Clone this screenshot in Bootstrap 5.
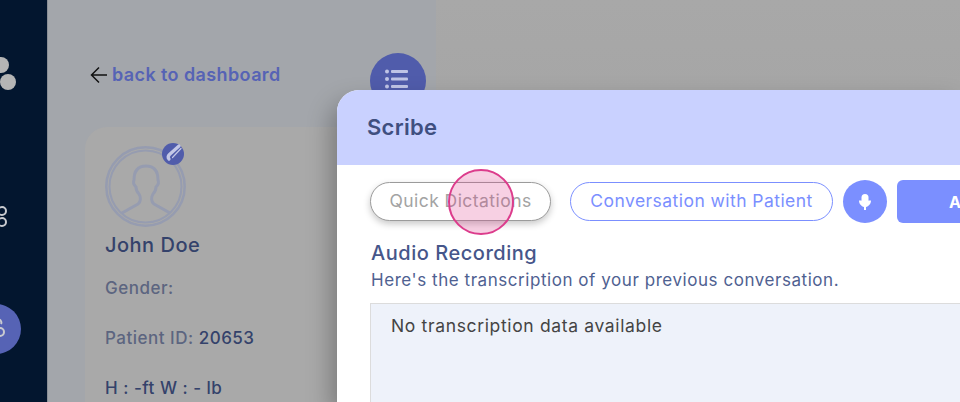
<!DOCTYPE html>
<html lang="en">
<head>
    <meta charset="UTF-8">
    <meta name="viewport" content="width=device-width, initial-scale=1.0">
    <title>Scribe</title>
    <link href="https://cdn.jsdelivr.net/npm/bootstrap@5.3.0/dist/css/bootstrap.min.css" rel="stylesheet">
    <style>
        body {
            height: 402px;
            overflow: hidden;
            position: relative;
            background: linear-gradient(#a8a8a8, #9f9f9f);
            font-family: "Inter", "Liberation Sans", sans-serif;
        }
        .side-rail {
            width: 48px;
            height: 402px;
            flex: none;
            background: #03162f;
            border-right: 1px solid #8b8f96;
        }
        .side-rail svg { display: block; }
        .patient-panel {
            width: 388px;
            height: 402px;
            flex: none;
            background: #a3a6ab;
            padding: 53px 10px 0 37px;
        }
        .back-row { padding: 10px 0 0 5px; }
        .back-link {
            color: #5663b5;
            font-size: 18px;
            font-weight: 600;
            line-height: 24px;
            text-decoration: none;
            letter-spacing: 0.4px;
        }
        .list-btn {
            width: 56px;
            height: 56px;
            background: #505cab;
        }
        .list-btn svg { margin-bottom: 4px; margin-right: 2px; }
        .patient-card {
            margin-top: 18px;
            margin-right: -10px;
            padding: 19px 20px;
            background: #a9a9a9;
            border-radius: 22px 0 0 0;
            color: #34426b;
        }
        .avatar-wrap { width: 81px; height: 81px; }
        .edit-dot {
            top: -3px;
            right: 2px;
            width: 22px;
            height: 22px;
            background: #505cab;
        }
        .edit-dot svg { overflow: visible; }
        .patient-name { font-size: 20px; font-weight: 500; line-height: 24px; letter-spacing: 0.5px; margin: 6px 0 0; }
        .patient-line { font-size: 17px; font-weight: 500; line-height: 24px; letter-spacing: 0.5px; margin: 0; color: #5c6580; }
        .patient-line b { font-weight: 500; color: #34426b; }
        .line-gender { margin-top: 19px; }
        .line-id { margin-top: 26px; }
        .line-size { margin-top: 26px; color: #34426b; }

        .scribe-modal {
            position: absolute;
            left: 337px;
            top: 90px;
            width: 623px;
            height: 312px;
            border: 0;
            background: #fff;
            border-radius: 22px 0 0 0;
            overflow: hidden;
            box-shadow: -6px 12px 24px rgba(0, 0, 0, 0.28);
        }
        .scribe-head {
            height: 75px;
            flex: none;
            background: #c9d1ff;
            padding: 0 30px;
            border: 0;
            border-radius: 0;
        }
        .scribe-title {
            color: #3f4f80;
            font-size: 22px;
            font-weight: 600;
            letter-spacing: 0.3px;
            margin: 0;
        }
        .scribe-body { padding: 15px 0 0 33px; min-height: 0; }
        .pill-btn {
            height: 39px;
            font-size: 17.5px;
            letter-spacing: 0.45px;
            line-height: 1;
            padding: 0 0 2px;
            flex: none;
            border-radius: 20px;
            background: #fff;
        }
        .pill-quick {
            width: 181px;
            color: #a3a3a3;
            border: 1px solid #9b9b9b;
            box-shadow: 0 3px 7px rgba(0, 0, 0, 0.22);
        }
        .pill-talk {
            width: 263px;
            margin-left: 19px;
            color: #7b8fff;
            border: 1px solid #7b8fff;
        }
        .mic-btn {
            width: 44px;
            height: 43px;
            flex: none;
            margin-left: 10px;
            background: #7b8fff;
            border: 0;
        }
        .add-btn {
            height: 43px;
            flex: 1 0 0;
            margin-left: 10px;
            background: #7b8fff;
            border: 0;
            color: #fff;
            font-weight: 700;
            font-size: 16px;
            border-radius: 6px 0 0 6px;
            padding: 0 0 0 52px;
            text-align: left;
        }
        .audio-title {
            color: #46568a;
            font-size: 20px;
            font-weight: 500;
            letter-spacing: 0.53px;
            line-height: 24px;
            margin: 18px 0 0 1px;
        }
        .audio-sub {
            color: #4f6191;
            font-size: 17px;
            letter-spacing: 0.55px;
            line-height: 24px;
            margin: 3px 0 11px 1px;
        }
        .transcript-box {
            background: #eef2fa;
            border: 1px solid #dcdcdc;
            border-width: 1px 0 0 1px;
            padding: 10px 20px;
            color: #444;
            font-size: 17.5px;
            letter-spacing: 0.65px;
            line-height: 24px;
        }
        .tap-ring {
            position: absolute;
            left: 448px;
            top: 169px;
            width: 66px;
            height: 66px;
            border-radius: 50%;
            border: 2px solid #dc3c8c;
            background: rgba(220, 60, 140, 0.24);
        }
    </style>
</head>
<body>
    <div class="d-flex">
        <nav class="side-rail">
            <svg width="47" height="402" viewBox="0 0 47 402">
                <circle cx="1" cy="65" r="8" fill="#b5b5b5"/>
                <circle cx="8" cy="82" r="8" fill="#b5b5b5"/>
                <g fill="none" stroke="#c9cbd0" stroke-width="2">
                    <circle cx="2" cy="211" r="4"/>
                    <circle cx="2" cy="222" r="4"/>
                </g>
                <circle cx="-4" cy="329" r="25" fill="#5663b5"/>
                <g fill="none" stroke="#c9cbd0" stroke-width="2">
                    <path d="M-2 319c3 1 4 3 3 5"/>
                    <circle cx="0" cy="332" r="4"/>
                </g>
            </svg>
        </nav>
        <div class="patient-panel d-flex flex-column">
            <div class="d-flex align-items-start justify-content-between">
                <div class="back-row d-flex align-items-center gap-1">
                    <svg width="18" height="18" viewBox="0 0 18 18" fill="none" stroke="#111" stroke-width="1.5"><path d="M17 9H1.500M9 1.500 1.500 9 9 16.500"/></svg>
                    <a class="back-link" href="#">back to dashboard</a>
                </div>
                <button class="btn list-btn rounded-circle p-0 d-flex align-items-center justify-content-center border-0" type="button" aria-label="list">
                    <svg width="24" height="22" viewBox="0 0 24 22" fill="#bfc4e6"><circle cx="2" cy="3.500" r="2"/><circle cx="2" cy="11" r="2"/><circle cx="2" cy="18.500" r="2"/><rect x="6" y="2" width="17" height="3" rx="1"/><rect x="6" y="9.500" width="17" height="3" rx="1"/><rect x="6" y="17" width="17" height="3" rx="1"/></svg>
                </button>
            </div>
            <div class="patient-card flex-grow-1">
                <div class="avatar-wrap position-relative">
                    <svg width="81" height="81" viewBox="0 0 81 81" fill="none" stroke="#969cb0" stroke-width="2.500">
                        <circle cx="40.500" cy="40.500" r="39.200"/>
                        <circle cx="40.500" cy="40.500" r="36" stroke-width="2"/>
                        <path d="M17 67 33 58c3-2 3-7 1-10-2-2-3-4-3-7-2-2-3-5-2-7 0-9 4-14 12-14s12 5 12 14c1 2 0 5-2 7 0 3-1 5-3 7-2 3-2 8 1 10l16 9" stroke-width="3"/>
                    </svg>
                    <span class="edit-dot position-absolute rounded-circle d-flex align-items-center justify-content-center">
                        <svg width="22" height="22" viewBox="0 0 22 22" fill="none" stroke-linecap="round"><path d="M7 16c-1.500-1.500-1-3 .5-4.500L17 3" stroke="#c3c7e6" stroke-width="3.200"/><path d="M10.500 14.500 19 5.500" stroke="#c3c7e6" stroke-width="1.200"/></svg>
                    </span>
                </div>
                <p class="patient-name">John Doe</p>
                <p class="patient-line line-gender">Gender:</p>
                <p class="patient-line line-id">Patient ID: <b>20653</b></p>
                <p class="patient-line line-size">H : -ft W : - lb</p>
            </div>
        </div>
    </div>

    <div class="modal-content scribe-modal">
        <div class="modal-header scribe-head">
            <h5 class="scribe-title">Scribe</h5>
        </div>
        <div class="modal-body scribe-body d-flex flex-column">
            <div class="d-flex align-items-center">
                <button class="btn pill-btn pill-quick" type="button">Quick Dictations</button>
                <button class="btn pill-btn pill-talk" type="button">Conversation with Patient</button>
                <button class="btn mic-btn rounded-circle p-0 d-flex align-items-center justify-content-center" type="button" aria-label="record">
                    <svg width="14" height="16" viewBox="0 0 14 16" fill="#fff"><rect x="3.500" y="0" width="7" height="9" rx="3.500"/><path d="M1 6.500h12c0 3.500-2.500 6-5 6.400V16H6v-3.100C3.500 12.500 1 10 1 6.500z"/></svg>
                </button>
                <button class="btn add-btn" type="button">A</button>
            </div>
            <h6 class="audio-title">Audio Recording</h6>
            <p class="audio-sub">Here's the transcription of your previous conversation.</p>
            <div class="transcript-box flex-grow-1">No transcription data available</div>
        </div>
    </div>
    <div class="tap-ring"></div>

    <script src="https://cdn.jsdelivr.net/npm/bootstrap@5.3.0/dist/js/bootstrap.bundle.min.js"></script>
</body>
</html>
